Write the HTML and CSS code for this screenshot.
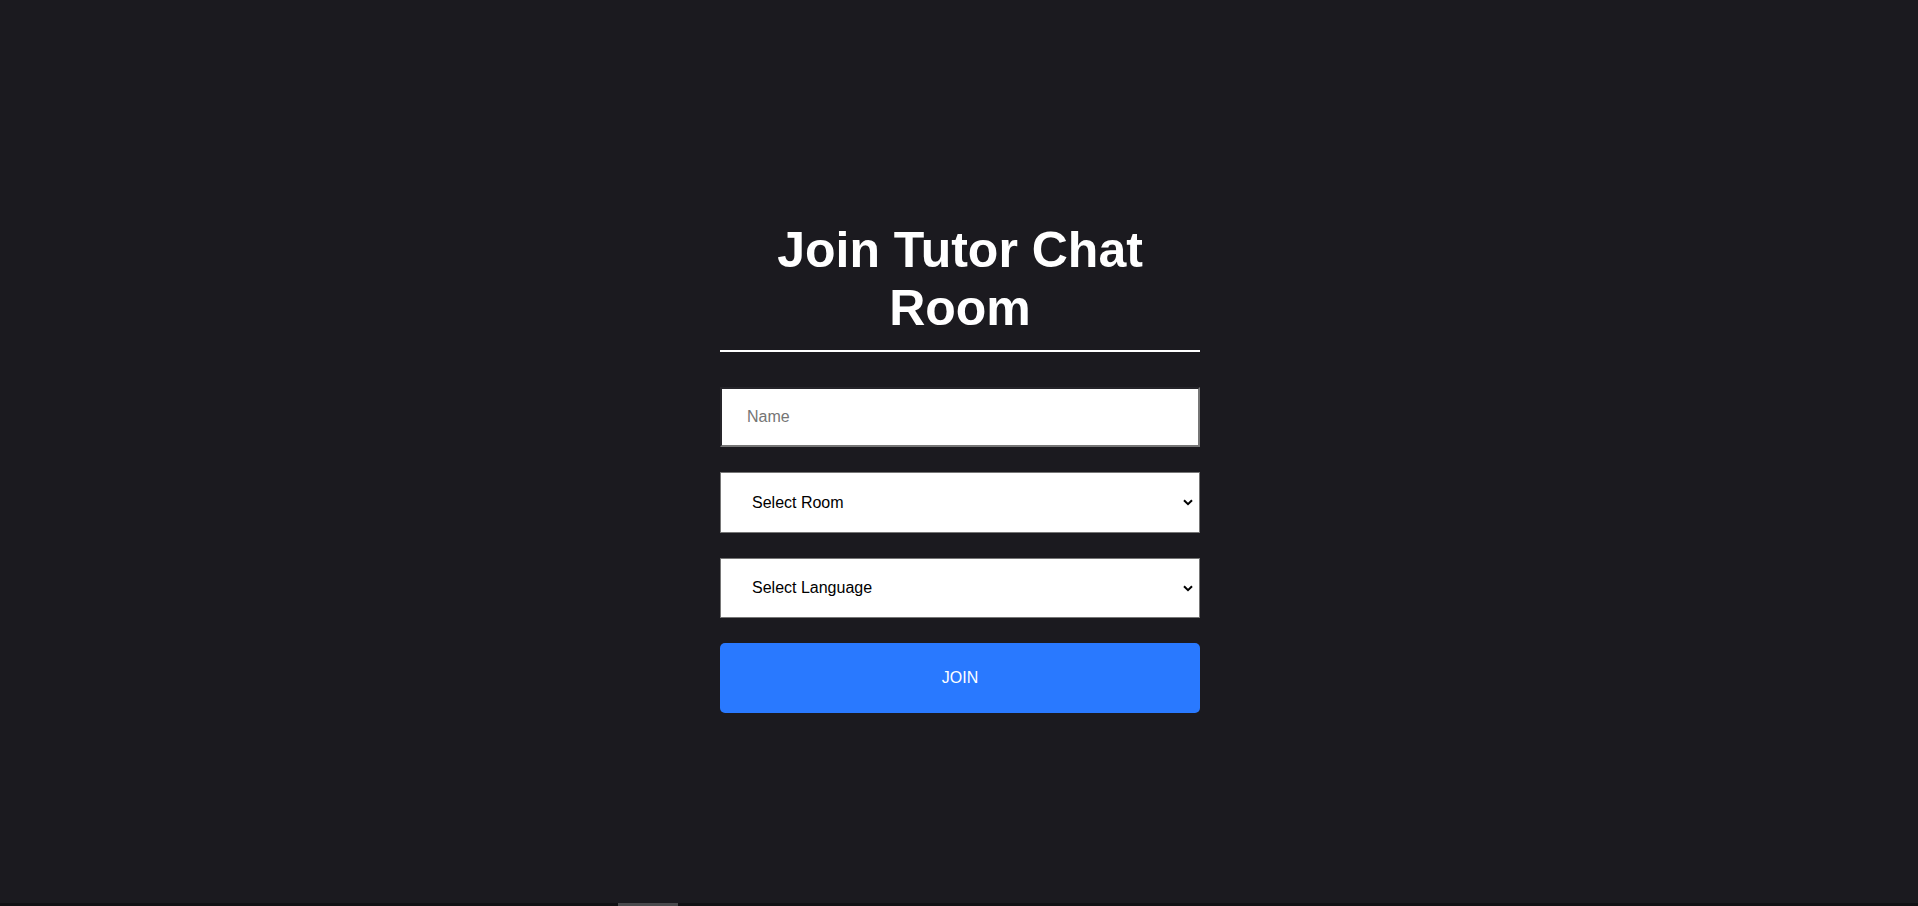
FILE: index.html
```html
<!DOCTYPE html>
<html lang="en">
<head>
<meta charset="utf-8">
<title>Join Tutor Chat Room</title>
<link rel="stylesheet" href="styles.css">
</head>
<body>
  <main class="join-page">
    <div class="join-box">
      <h1 class="join-title">Join Tutor Chat Room</h1>
      <form class="join-form">
        <input class="field field-input" type="text" placeholder="Name">
        <div class="select-wrap">
          <select class="field field-select">
            <option>Select Room</option>
          </select>
          <svg class="chev" width="10" height="7" viewBox="0 0 10 7" aria-hidden="true"><path d="M1 1.2 L5 5.2 L9 1.2" fill="none" stroke="#000" stroke-width="2"/></svg>
        </div>
        <div class="select-wrap">
          <select class="field field-select">
            <option>Select Language</option>
          </select>
          <svg class="chev" width="10" height="7" viewBox="0 0 10 7" aria-hidden="true"><path d="M1 1.2 L5 5.2 L9 1.2" fill="none" stroke="#000" stroke-width="2"/></svg>
        </div>
        <button class="join-btn" type="button">JOIN</button>
      </form>
    </div>
  </main>
  <div class="hscroll"><div class="hscroll-thumb"></div></div>
</body>
</html>
```
FILE: styles.css
```css
* { box-sizing: border-box; }
html, body {
  margin: 0;
  padding: 0;
  height: 100%;
}
body {
  background: #1b1a1f;
  color: #fff;
  font-family: "Liberation Sans", Arial, sans-serif;
  overflow: hidden;
}
.join-page {
  display: flex;
  justify-content: center;
  padding-top: 221px;
  padding-left: 2px;
}
.join-box {
  width: 480px;
  display: flex;
  flex-direction: column;
}
.join-title {
  margin: 0;
  font-size: 50px;
  line-height: 58px;
  font-weight: bold;
  text-align: center;
  padding-bottom: 13px;
  border-bottom: 2px solid #fff;
}
.join-form {
  margin-top: 35px;
  display: flex;
  flex-direction: column;
  gap: 25px;
}
.field {
  width: 100%;
  font-family: "Liberation Sans", Arial, sans-serif;
  font-size: 16px;
  background: #fff;
  color: #000;
  margin: 0;
}
.field-input {
  height: 60px;
  padding: 0 25px;
  border-style: solid;
  border-width: 2px;
  border-color: #26252a #767676 #767676 #26252a;
  outline: none;
}
.field-input::placeholder {
  color: #757575;
}
.select-wrap {
  position: relative;
  display: flex;
}
.field-select {
  -webkit-appearance: none;
  appearance: none;
  height: 60.5px;
  padding: 0 30px 0 31px;
  border: 1px solid #767676;
  border-radius: 0;
}
.chev {
  position: absolute;
  right: 7px;
  top: 27px;
  pointer-events: none;
}
.join-btn {
  height: 70px;
  border: none;
  border-radius: 5px;
  background: #2979ff;
  color: #fff;
  font-family: "Liberation Sans", Arial, sans-serif;
  font-size: 16px;
  cursor: pointer;
}
.hscroll {
  position: fixed;
  left: 0;
  right: 0;
  bottom: 0;
  height: 3px;
  background: #111114;
}
.hscroll-thumb {
  position: absolute;
  left: 618px;
  width: 60px;
  top: 0;
  bottom: 0;
  background: #4a4a4d;
}
```
